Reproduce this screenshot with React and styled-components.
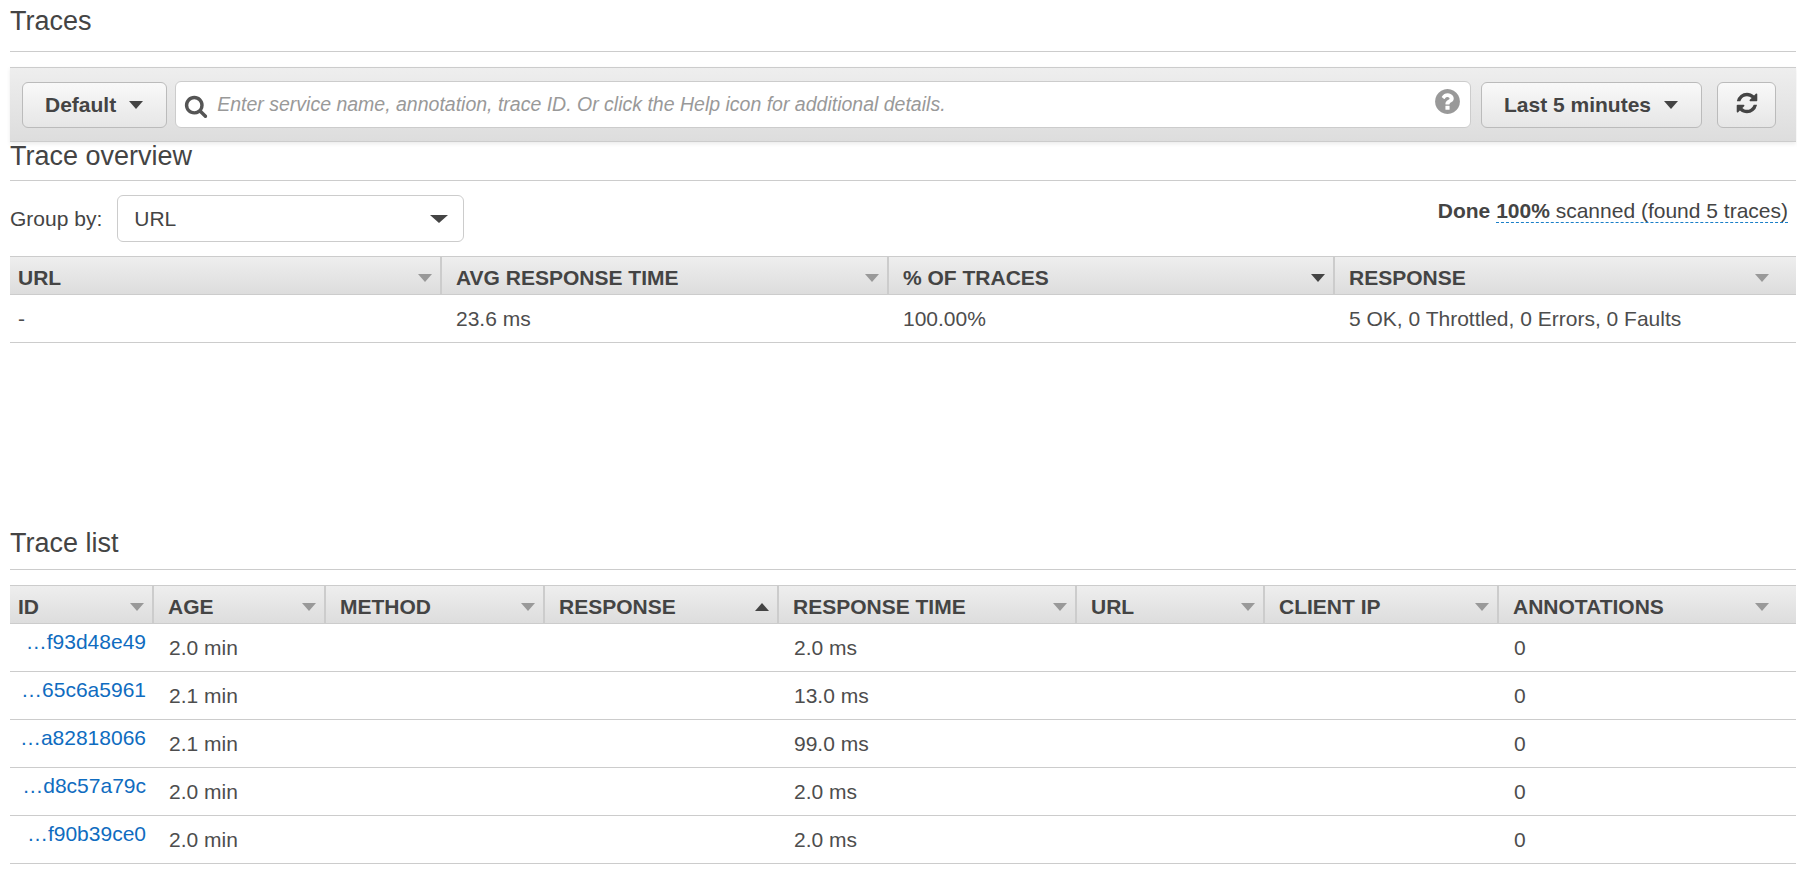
import React from 'react';
import styled, { createGlobalStyle } from 'styled-components';

const GlobalStyle = createGlobalStyle`
  html, body {
    margin: 0;
    background: #fff;
  }
  body {
    font-family: "Liberation Sans", Arial, sans-serif;
    font-size: 21px;
    color: #444;
  }
`;

const overviewCols = '432px 447px 446px 461px';
const listCols = '144px 172px 219px 234px 298px 188px 234px 297px';

const overviewHeads = [
  { label: 'URL' },
  { label: 'AVG RESPONSE TIME' },
  { label: '% OF TRACES', sort: 'down' },
  { label: 'RESPONSE' },
];

const listHeads = [
  { label: 'ID' },
  { label: 'AGE' },
  { label: 'METHOD' },
  { label: 'RESPONSE', sort: 'up' },
  { label: 'RESPONSE TIME' },
  { label: 'URL' },
  { label: 'CLIENT IP' },
  { label: 'ANNOTATIONS' },
];

const traces = [
  { id: '…f93d48e49', age: '2.0 min', time: '2.0 ms' },
  { id: '…65c6a5961', age: '2.1 min', time: '13.0 ms' },
  { id: '…a82818066', age: '2.1 min', time: '99.0 ms' },
  { id: '…d8c57a79c', age: '2.0 min', time: '2.0 ms' },
  { id: '…f90b39ce0', age: '2.0 min', time: '2.0 ms' },
];

// font awesome 4 glyphs, the 5 ones in react-icons are drawn differently
const searchPath = 'M1216 832q0-185-131.5-316.5t-316.5-131.5-316.5 131.5-131.5 316.5 131.5 316.5 316.5 131.5 316.5-131.5 131.5-316.5zm512 832q0 52-38 90t-90 38q-54 0-90-38l-343-342q-179 124-399 124-143 0-273.5-55.5t-225-150-150-225-55.5-273.5 55.5-273.5 150-225 225-150 273.5-55.5 273.5 55.5 225 150 150 225 55.5 273.5q0 220-124 399l343 343q37 37 37 90z';
const helpPath = 'M1024 1376v-192q0-14-9-23t-23-9h-192q-14 0-23 9t-9 23v192q0 14 9 23t23 9h192q14 0 23-9t9-23zm256-672q0-88-55.5-163t-138.5-116-170-41q-243 0-371 213-15 24 8 42l132 100q7 6 19 6 16 0 25-12 53-68 86-92 34-24 86-24 48 0 85.5 26t37.5 59q0 38-20 61t-68 45q-63 28-115.5 86.5t-52.5 125.5v36q0 14 9 23t23 9h192q14 0 23-9t9-23q0-19 21.5-49.5t54.5-49.5q32-18 49-28.5t46-35 44.5-48 28-60.5 12.5-81zm384 192q0 209-103 385.5t-279.5 279.5-385.5 103-385.5-103-279.5-279.5-103-385.5 103-385.5 279.5-279.5 385.5-103 385.5 103 279.5 279.5 103 385.5z';
const refreshPath = 'M1639 1056q0 5-1 7-64 268-268 434.5t-478 166.5q-146 0-282.5-55t-243.5-157l-129 129q-19 19-45 19t-45-19-19-45v-448q0-26 19-45t45-19h448q26 0 45 19t19 45-19 45l-137 137q71 66 161 102t187 36q134 0 250-65t186-179q11-17 53-117 8-23 30-23h192q13 0 22.5 9.5t9.5 22.5zm25-800v448q0 26-19 45t-45 19h-448q-26 0-45-19t-19-45 19-45l138-138q-148-137-349-137-134 0-250 65t-186 179q-11 17-53 117-8 23-30 23h-199q-13 0-22.5-9.5t-9.5-22.5v-7q65-268 270-434.5t480-166.5q146 0 284 55.5t245 156.5l130-129q19-19 45-19t45 19 19 45z';

const Icon = ({ d, size }) => (
  <svg width={size} height={size} viewBox="0 0 1792 1792" fill="currentColor">
    <path d={d} />
  </svg>
);

const TableHead = ({ cols, heads }) => (
  <HeadRow $cols={cols}>
    {heads.map((h, i) => (
      <HeadCell key={i} $first={i === 0} $last={i === heads.length - 1}>
        <span>{h.label}</span>
        <Caret $up={h.sort === 'up'} $color={h.sort ? '#444' : '#999'} />
      </HeadCell>
    ))}
  </HeadRow>
);

const App = () => (
  <Page>
    <GlobalStyle />
    <Heading $top={7} $bottom={16}>Traces</Heading>

    <Toolbar>
      <Button>
        Default
        <Caret $color="#444" />
      </Button>
      <SearchBox>
        <SearchIcon><Icon d={searchPath} size={24} /></SearchIcon>
        <Placeholder>Enter service name, annotation, trace ID. Or click the Help icon for additional details.</Placeholder>
        <HelpIcon><Icon d={helpPath} size={29} /></HelpIcon>
      </SearchBox>
      <Button $left={10}>
        Last 5 minutes
        <Caret $color="#444" />
      </Button>
      <RefreshButton><Icon d={refreshPath} size={24} /></RefreshButton>
    </Toolbar>

    <Heading $top={0} $bottom={10}>Trace overview</Heading>

    <GroupRow>
      <GroupLeft>
        Group by:
        <Select>
          URL
          <Caret $width={9} $height={8} $color="#444" />
        </Select>
      </GroupLeft>
      <Status>
        <b>Done</b> <Scanned><b>100%</b> scanned (found 5 traces)</Scanned>
      </Status>
    </GroupRow>

    <TableHead cols={overviewCols} heads={overviewHeads} />
    <Row $cols={overviewCols}>
      <Cell $first>-</Cell>
      <Cell>23.6 ms</Cell>
      <Cell>100.00%</Cell>
      <Cell>5 OK, 0 Throttled, 0 Errors, 0 Faults</Cell>
    </Row>

    <Spacer />

    <Heading $top={0} $bottom={12}>Trace list</Heading>

    <ListTable>
      <TableHead cols={listCols} heads={listHeads} />
      {traces.map(t => (
        <Row key={t.id} $cols={listCols}>
          <IdCell><IdLink>{t.id}</IdLink></IdCell>
          <ListCell>{t.age}</ListCell>
          <ListCell />
          <ListCell />
          <ListCell>{t.time}</ListCell>
          <ListCell />
          <ListCell />
          <ListCell>0</ListCell>
        </Row>
      ))}
    </ListTable>
  </Page>
);

const Page = styled.div`
  width: 1786px;
  margin-left: 10px;
  padding-bottom: 17px;
`;

const Heading = styled.h2`
  margin: 0;
  padding: ${p => p.$top}px 0 ${p => p.$bottom}px;
  font-size: 27px;
  font-weight: 400;
  line-height: 28px;
  color: #444;
  border-bottom: 1px solid #ccc;
`;

const Toolbar = styled.div`
  display: flex;
  align-items: center;
  box-sizing: border-box;
  height: 75px;
  margin-top: 15px;
  padding: 0 20px 0 12px;
  background: linear-gradient(#eee, #ddd);
  border-top: 1px solid #ccc;
  border-bottom: 1px solid #ccc;
  box-shadow: 0 2px 4px rgba(0, 0, 0, 0.08);
`;

const Button = styled.button`
  display: flex;
  align-items: center;
  gap: 13px;
  box-sizing: border-box;
  height: 46px;
  margin-left: ${p => p.$left || 0}px;
  padding: 0 23px 0 22px;
  font-family: inherit;
  font-size: 21px;
  font-weight: 700;
  color: #444;
  background: linear-gradient(#f9f9f9, #e6e6e6);
  border: 1px solid #bbb;
  border-radius: 6px;
`;

const RefreshButton = styled(Button)`
  justify-content: center;
  width: 59px;
  margin-left: 15px;
  padding: 0 0 4px;
`;

const SearchBox = styled.div`
  display: flex;
  align-items: center;
  flex: 1;
  box-sizing: border-box;
  height: 47px;
  margin-left: 8px;
  padding: 0 8px 0 8px;
  background: #fff;
  border: 1px solid #ccc;
  border-radius: 6px;
`;

const SearchIcon = styled.span`
  display: flex;
  color: #555;
  margin-right: 9px;
  padding-top: 2px;
`;

const Placeholder = styled.span`
  flex: 1;
  font-size: 19.5px;
  font-style: italic;
  color: #999;
`;

const HelpIcon = styled.span`
  display: flex;
  color: #999;
  padding-bottom: 7px;
`;

const Caret = styled.i`
  flex: none;
  width: 0;
  height: 0;
  border-left: ${p => p.$width || 7}px solid transparent;
  border-right: ${p => p.$width || 7}px solid transparent;
  border-top: ${p => (p.$up ? 0 : `${p.$height || 8}px solid ${p.$color}`)};
  border-bottom: ${p => (p.$up ? `${p.$height || 8}px solid ${p.$color}` : 0)};
`;

const GroupRow = styled.div`
  display: flex;
  align-items: center;
  justify-content: space-between;
  margin: 14px 0;
  padding-right: 8px;
`;

const GroupLeft = styled.div`
  display: flex;
  align-items: center;
  gap: 15px;
`;

const Select = styled.div`
  display: flex;
  align-items: center;
  justify-content: space-between;
  box-sizing: border-box;
  width: 347px;
  height: 47px;
  padding: 0 15px 0 16px;
  background: #fff;
  border: 1px solid #ccc;
  border-radius: 6px;
`;

const Status = styled.div`
  line-height: 24px;
  margin-bottom: 15px;
`;

const Scanned = styled.span`
  border-bottom: 1px dashed #1a7fc8;
`;

const HeadRow = styled.div`
  display: grid;
  grid-template-columns: ${p => p.$cols};
  box-sizing: border-box;
  height: 39px;
  background: linear-gradient(#eee, #ddd);
  border-top: 1px solid #ccc;
  border-bottom: 1px solid #ccc;
`;

const HeadCell = styled.div`
  display: flex;
  align-items: center;
  justify-content: space-between;
  box-sizing: border-box;
  padding: 4px ${p => (p.$last ? 27 : 8)}px 0 ${p => (p.$first ? 8 : 14)}px;
  font-weight: 700;
  color: #444;
  white-space: nowrap;
  border-right: ${p => (p.$last ? 0 : '2px solid #ccc')};
`;

const Row = styled.div`
  display: grid;
  grid-template-columns: ${p => p.$cols};
  box-sizing: border-box;
  height: 48px;
  border-bottom: 1px solid #ccc;
`;

const Cell = styled.div`
  display: flex;
  align-items: center;
  padding-left: ${p => (p.$first ? 8 : 14)}px;
  color: #4d4d4d;
`;

const ListCell = styled(Cell)`
  padding-left: 15px;
`;

const IdCell = styled.div`
  display: flex;
  align-items: center;
  justify-content: flex-end;
  padding: 0 8px 11px 0;
`;

const IdLink = styled.a`
  color: #0f6cc0;
`;

const Spacer = styled.div`
  height: 186px;
`;

const ListTable = styled.div`
  margin-top: 15px;
`;

export default App;
